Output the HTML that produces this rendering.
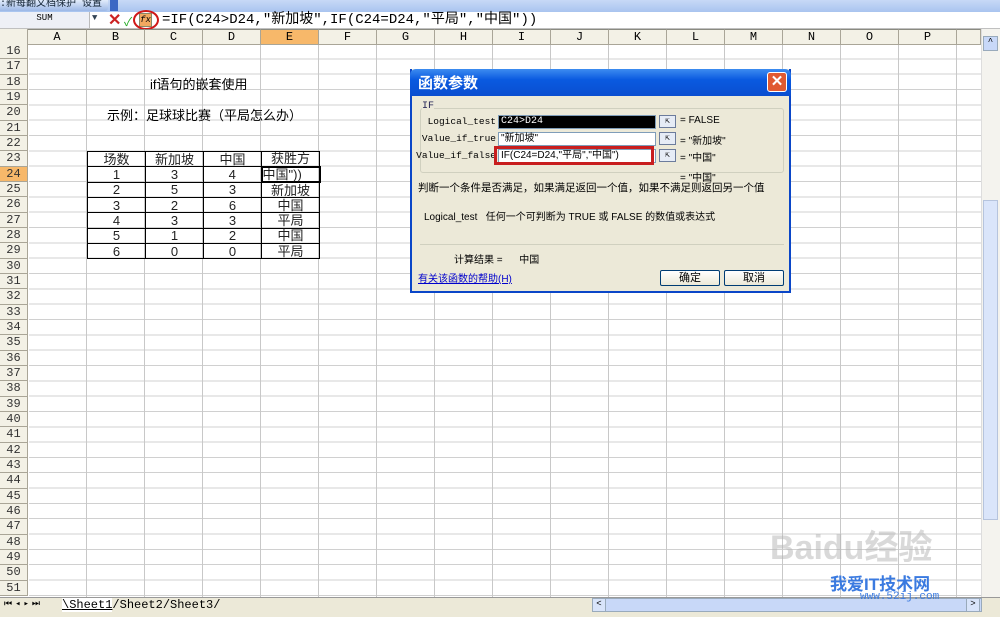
<!DOCTYPE html>
<html><head><meta charset="utf-8"><style>
*{margin:0;padding:0;box-sizing:border-box}
body{width:1000px;height:617px;overflow:hidden;background:#fff;position:relative;font-family:"Liberation Mono","Noto Sans CJK SC",monospace;font-size:12px;color:#000}
.a{position:absolute}
.zh{font-family:"Liberation Sans","Noto Sans CJK SC",sans-serif}
#grid{left:29px;top:44px;width:952px;height:553px;
background:repeating-linear-gradient(to right,transparent 0 57px,#c8c8c8 57px 58px),repeating-linear-gradient(to bottom,transparent 0 14.33px,#d0d0d0 14.33px 15.33px)}
.rh{left:0;width:28px;height:15.33px;background:#f3f1e6;border-bottom:1px solid #a9a597;border-right:1px solid #a9a597;text-align:center;font-size:12px;line-height:15px;color:#333}
.ch{top:29px;height:16px;background:#f3f1e6;border-right:1px solid #a9a597;border-bottom:1px solid #a9a597;border-top:1px solid #8a8a80;text-align:center;line-height:15px;font-size:12px}
table{border-collapse:collapse;position:absolute;left:87px;top:151px}
td{border:1px solid #000;width:58px;height:15.33px;text-align:center;font-size:13px;line-height:13px;padding:0;font-family:"Liberation Sans","Noto Sans CJK SC",sans-serif;color:#222}
.dlg{left:410px;top:69px;width:381px;height:224px;background:#ece9d8;border:2px solid #0a46c8;border-top:none}
.btn{width:60px;height:16px;border:1px solid #003c74;border-radius:2px;background:linear-gradient(#fff,#ece9d8);text-align:center;line-height:14px;font-size:11px}
.ref{width:17px;height:13px;border:1px solid #6c7c9c;background:#e6ecf6;font-size:8px;text-align:center;line-height:11px}
.fld{height:14px;border:1px solid #7f9db9;background:#fff;font-size:10px;line-height:12px;padding-left:2px}
.lbl{font-size:9.5px;text-align:right;width:84px;left:0;white-space:nowrap}
</style></head><body>
<div class="a" style="left:0;top:0;width:1000px;height:12px;background:linear-gradient(#c7d9f6,#a9c4ef)"></div>
<div class="a" style="left:0;top:0;width:108px;height:11px;background:linear-gradient(#e2ecfb,#9cb8e6);border-radius:0 0 3px 0;font-size:10px;line-height:9px;color:#123" >:新每翻文档保护 设置</div>
<div class="a" style="left:110px;top:0;width:8px;height:11px;background:#3c68c4"></div>
<div class="a" style="left:0;top:12px;width:1000px;height:17px;background:#fff;border-bottom:1px solid #c0c0c0"></div>
<div class="a" style="left:0;top:12px;width:90px;height:16px;background:#eef0f6;border-right:1px solid #bbb;font-size:9px;text-align:center;line-height:12px">SUM</div>
<div class="a" style="left:92px;top:13px;font-size:9px;color:#345">▼</div>
<div class="a" style="left:108px;top:10px;font-size:16px;color:#c22;font-weight:bold;font-family:'Liberation Sans',sans-serif">✕</div>
<div class="a" style="left:124px;top:13px;font-size:12px;color:#2a2">✓</div>
<div class="a" style="left:139px;top:13px;width:13px;height:14px;background:#f2a860;border:1px solid #886;font-size:9px;line-height:12px;text-align:center;font-style:italic">fx</div>
<div class="a" style="left:133px;top:10px;width:26px;height:20px;border:2px solid #d01818;border-radius:50%"></div>
<div class="a zh" style="left:162px;top:11px;font-size:14px;font-family:'Liberation Mono','Noto Sans CJK SC',monospace;line-height:18px">=IF(C24&gt;D24,"新加坡",IF(C24=D24,"平局","中国"))</div>

<div id="grid" class="a"></div>
<div class="a" style="left:0;top:29px;width:28px;height:16px;background:#f3f1e6;border-right:1px solid #a9a597;border-bottom:1px solid #a9a597"></div>
<div class="a ch" style="left:28px;width:59px">A</div>
<div class="a ch" style="left:87px;width:58px">B</div>
<div class="a ch" style="left:145px;width:58px">C</div>
<div class="a ch" style="left:203px;width:58px">D</div>
<div class="a ch" style="left:261px;width:58px;background:#f7b86a">E</div>
<div class="a ch" style="left:319px;width:58px">F</div>
<div class="a ch" style="left:377px;width:58px">G</div>
<div class="a ch" style="left:435px;width:58px">H</div>
<div class="a ch" style="left:493px;width:58px">I</div>
<div class="a ch" style="left:551px;width:58px">J</div>
<div class="a ch" style="left:609px;width:58px">K</div>
<div class="a ch" style="left:667px;width:58px">L</div>
<div class="a ch" style="left:725px;width:58px">M</div>
<div class="a ch" style="left:783px;width:58px">N</div>
<div class="a ch" style="left:841px;width:58px">O</div>
<div class="a ch" style="left:899px;width:58px">P</div>
<div class="a ch" style="left:957px;width:24px"></div>
<div id="rows"></div>
<script>
var h='';for(var i=16;i<=51;i++){var t=44+(i-16)*15.33;h+='<div class="a rh" style="top:'+t+'px;'+(i==24?'background:#f7b86a':'')+'">'+i+'</div>';}document.getElementById('rows').innerHTML=h;
</script>
<div class="a" style="left:981px;top:29px;width:19px;height:568px;background:#f4f3ee;border-left:1px solid #ddd"></div>
<div class="a" style="left:983px;top:36px;width:15px;height:15px;background:#c8d8f8;border:1px solid #9ab;font-size:9px;text-align:center">^</div>
<div class="a" style="left:983px;top:200px;width:15px;height:320px;background:#dae5fa;border:1px solid #b6c4dd"></div>

<div class="a zh" style="left:150px;top:74px;font-size:13px">if语句的嵌套使用</div>
<div class="a zh" style="left:107px;top:105px;font-size:13px">示例：足球球比赛（平局怎么办）</div>
<table>
<tr><td>场数</td><td>新加坡</td><td>中国</td><td>获胜方</td></tr>
<tr><td>1</td><td>3</td><td>4</td><td style="text-align:left;border:2px solid #000">中国"))</td></tr>
<tr><td>2</td><td>5</td><td>3</td><td>新加坡</td></tr>
<tr><td>3</td><td>2</td><td>6</td><td>中国</td></tr>
<tr><td>4</td><td>3</td><td>3</td><td>平局</td></tr>
<tr><td>5</td><td>1</td><td>2</td><td>中国</td></tr>
<tr><td>6</td><td>0</td><td>0</td><td>平局</td></tr>
</table>

<div class="a dlg">
 <div class="a" style="left:-2px;top:0;width:381px;height:27px;background:linear-gradient(#3d8cf0,#0a5ae0 40%,#0a4ed0);border-radius:6px 6px 0 0"></div>
 <div class="a zh" style="left:6px;top:3px;color:#fff;font-size:15px;font-weight:bold">函数参数</div>
 <div class="a" style="left:355px;top:3px;width:20px;height:20px;background:#e05a32;border:1px solid #fff;border-radius:3px;color:#fff;text-align:center;font-weight:bold;font-size:15px;line-height:18px;font-family:'Liberation Sans'">✕</div>
 <div class="a" style="left:8px;top:39px;width:364px;height:65px;border:1px solid #d0d0bf;border-radius:3px"></div>
 <div class="a" style="left:10px;top:32px;font-size:10px;background:#ece9d8;color:#225">IF</div>
 <div class="a lbl" style="top:47px">Logical_test</div>
 <div class="a lbl" style="top:64px">Value_if_true</div>
 <div class="a lbl" style="top:81px">Value_if_false</div>
 <div class="a fld" style="left:86px;top:46px;width:158px;background:#000;color:#fff">C24&gt;D24</div>
 <div class="a fld zh" style="left:86px;top:63px;width:158px">"新加坡"</div>
 <div class="a fld zh" style="left:86px;top:80px;width:158px">IF(C24=D24,"平局","中国")</div>
 <div class="a" style="left:82px;top:77px;width:160px;height:19px;border:3px solid #c81e1e"></div>
 <div class="a ref" style="left:247px;top:46px">⇱</div>
 <div class="a ref" style="left:247px;top:63px">⇱</div>
 <div class="a ref" style="left:247px;top:80px">⇱</div>
 <div class="a zh" style="left:268px;top:46px;font-size:10px">= FALSE</div>
 <div class="a zh" style="left:268px;top:63px;font-size:10px">= "新加坡"</div>
 <div class="a zh" style="left:268px;top:80px;font-size:10px">= "中国"</div>
 <div class="a zh" style="left:268px;top:100px;font-size:10px">= "中国"</div>
 <div class="a zh" style="left:6px;top:111px;font-size:10.5px">判断一个条件是否满足，如果满足返回一个值，如果不满足则返回另一个值</div>
 <div class="a zh" style="left:12px;top:139px;font-size:10px">Logical_test&nbsp;&nbsp;&nbsp;任何一个可判断为 TRUE 或 FALSE 的数值或表达式</div>
 <div class="a" style="left:8px;top:175px;width:364px;border-top:1px solid #d0d0bf"></div>
 <div class="a zh" style="left:42px;top:182px;font-size:10px">计算结果 =&nbsp;&nbsp;&nbsp;&nbsp;&nbsp;&nbsp;中国</div>
 <div class="a zh" style="left:6px;top:201px;font-size:10px;color:#00c;text-decoration:underline">有关该函数的帮助(H)</div>
 <div class="a btn zh" style="left:248px;top:201px">确定</div>
 <div class="a btn zh" style="left:312px;top:201px">取消</div>
</div>

<div class="a" style="left:0;top:597px;width:1000px;height:20px;background:#ece9d8;border-top:1px solid #999"></div>
<div class="a" style="left:4px;top:599px;font-size:9px;letter-spacing:3px">⏮◂▸⏭</div>
<div class="a" style="left:62px;top:598px;font-size:12px;line-height:15px"><span style="text-decoration:underline;background:#fff">\Sheet1</span>/Sheet2/Sheet3/</div>
<div class="a" style="left:592px;top:598px;width:390px;height:14px;background:#c8d8f8;border:1px solid #9ab"></div>
<div class="a" style="left:592px;top:598px;width:14px;height:14px;background:#d8e4fa;border:1px solid #9ab;font-size:9px;text-align:center">&lt;</div>
<div class="a" style="left:966px;top:598px;width:14px;height:14px;background:#d8e4fa;border:1px solid #9ab;font-size:9px;text-align:center">&gt;</div>
<div class="a" style="left:770px;top:520px;font-size:34px;color:rgba(180,180,180,.5);font-family:'Liberation Sans','Noto Sans CJK SC',sans-serif;font-weight:bold">Baidu经验</div>
<div class="a zh" style="left:830px;top:570px;font-size:17px;color:#3a7ae0;font-weight:bold">我爱IT技术网</div>
<div class="a" style="left:860px;top:591px;font-size:11px;color:#3a7ae0">www.52ij.com</div>
</body></html>
